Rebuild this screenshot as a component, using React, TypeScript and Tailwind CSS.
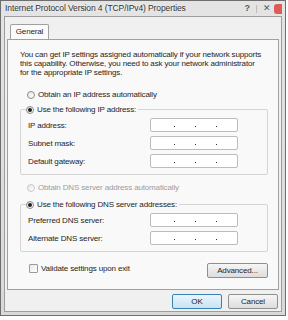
import React from 'react';

const font = { fontFamily: '"Liberation Sans", Arial, sans-serif' };

function Radio({ checked, disabled }: { checked?: boolean; disabled?: boolean }) {
  return (
    <span
      className={`flex h-[8px] w-[8px] shrink-0 items-center justify-center rounded-full border bg-gradient-to-br from-[#e6e6e6] to-[#ffffff] ${
        disabled ? 'border-[#c8c8c8]' : 'border-[#8c8c8c]'
      }`}
    >
      {checked && <span className="h-[4px] w-[4px] rounded-full bg-[#1e1e1e]" />}
    </span>
  );
}

function IpField() {
  return (
    <div className="flex h-[14px] w-[88px] items-end rounded-[2px] border border-[#bcbcbc] bg-white pb-[4px] pl-[23px]">
      <span className="h-[1px] w-[1px] bg-[#333]" />
      <span className="ml-[20px] h-[1px] w-[1px] bg-[#333]" />
      <span className="ml-[20px] h-[1px] w-[1px] bg-[#333]" />
    </div>
  );
}

function Row({ label }: { label: string }) {
  return (
    <div className="flex h-[14px] items-center justify-between">
      <span>{label}</span>
      <IpField />
    </div>
  );
}

function Button({ children, primary, w }: { children: React.ReactNode; primary?: boolean; w: string }) {
  return (
    <div
      className={`flex h-[15px] items-center justify-center rounded-[2px] border text-[8px] ${w} ${
        primary
          ? 'border-[#3c7fb1] bg-gradient-to-b from-[#eaf6fd] to-[#c7e2f3]'
          : 'border-[#8e8f8f] bg-gradient-to-b from-[#f6f6f6] to-[#dddddd]'
      }`}
    >
      {children}
    </div>
  );
}

export default function App() {
  return (
    <div className="h-[320px] w-[288px] overflow-hidden bg-[#ffffff] text-[#1e1e1e]" style={font}>
      <div className="flex h-[316px] w-[286px] flex-col border border-[#6e6e6e] bg-gradient-to-b from-[#e4e4e4] to-[#d9d9d9] px-[3px] pb-[3px]">
        {/* title bar */}
        <div className="flex h-[15px] shrink-0 items-center">
          <span className="ml-[1px] whitespace-nowrap text-[8.5px] tracking-[-0.1px] text-[#333] [text-shadow:0_0_3px_#fff]">
            Internet Protocol Version 4 (TCP/IPv4) Properties
          </span>
          <span className="ml-auto mr-[6px] text-[9px] font-bold text-[#5a5a5a]">?</span>
          <span className="h-[8px] w-[1px] bg-[#bdbdbd]" />
          <span className="ml-[6px] text-[9px] text-[#5a5a5a]">✕</span>
          <span className="ml-[3px] h-[10px] w-[8px] rounded-l-[3px] bg-[#e05a5a]" />
        </div>

        {/* client */}
        <div className="flex flex-1 flex-col border border-[#9d9d9d] bg-[#f0f0f0] px-[2px] text-[8px] tracking-[-0.15px]">
          {/* tab */}
          <div className="mt-[7px] ml-[3px] flex h-[15px] w-[39px] items-center justify-center rounded-t-[2px] border border-b-0 border-[#a0a0a0] bg-[#fbfbfb]">
            General
          </div>
          <div className="flex h-[251px] flex-col border border-[#a0a0a0] bg-[#f9f9f9] pl-[12px] pr-[10px] leading-[9px]">
            <p className="mt-[10px] whitespace-nowrap">
              You can get IP settings assigned automatically if your network supports
              <br />
              this capability. Otherwise, you need to ask your network administrator
              <br />
              for the appropriate IP settings.
            </p>

            <div className="mt-[13px] ml-[7px] flex items-center gap-[3px]">
              <Radio />
              <span>Obtain an IP address automatically</span>
            </div>

            {/* IP group */}
            <div className="relative mt-[10px] h-[66px] rounded-[2px] border border-[#d5d5d5]">
              <div className="absolute -top-[5px] left-[5px] flex items-center gap-[3px] bg-[#f9f9f9] pr-[2px]">
                <Radio checked />
                <span>Use the following IP address:</span>
              </div>
              <div className="mt-[8px] ml-[7px] mr-[29px] flex flex-col gap-[4px]">
                <Row label="IP address:" />
                <Row label="Subnet mask:" />
                <Row label="Default gateway:" />
              </div>
            </div>

            <div className="mt-[8px] ml-[7px] flex items-center gap-[3px] text-[#9c9c9c]">
              <Radio disabled />
              <span>Obtain DNS server address automatically</span>
            </div>

            {/* DNS group */}
            <div className="relative mt-[12px] h-[48px] rounded-[2px] border border-[#d5d5d5]">
              <div className="absolute -top-[5px] left-[5px] flex items-center gap-[3px] bg-[#f9f9f9] pr-[2px]">
                <Radio checked />
                <span>Use the following DNS server addresses:</span>
              </div>
              <div className="mt-[8px] ml-[7px] mr-[29px] flex flex-col gap-[4px]">
                <Row label="Preferred DNS server:" />
                <Row label="Alternate DNS server:" />
              </div>
            </div>

            <div className="mt-[11px] flex items-start">
              <div className="ml-[9px] mt-[1px] flex items-center gap-[3px]">
                <span className="h-[9px] w-[9px] rounded-[1px] border border-[#9a9a9a] bg-gradient-to-br from-[#e8e8e8] to-white" />
                <span>Validate settings upon exit</span>
              </div>
              <Button w="w-[61px] ml-auto">Advanced...</Button>
            </div>
          </div>

          <div className="mt-[4px] flex justify-end gap-[6px] pr-[1px]">
            <Button primary w="w-[50px]">OK</Button>
            <Button w="w-[50px]">Cancel</Button>
          </div>
        </div>
      </div>
    </div>
  );
}
